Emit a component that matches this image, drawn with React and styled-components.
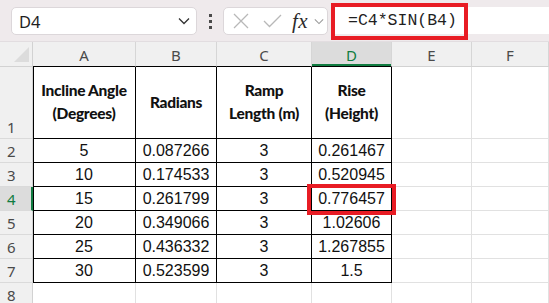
import React from 'react';
import styled, { createGlobalStyle } from 'styled-components';

const GlobalStyle = createGlobalStyle`
	html, body {
		margin: 0;
		padding: 0;
		background: #ffffff;
	}
	body {
		width: 549px;
		height: 303px;
		overflow: hidden;
		font-family: "Liberation Sans", Arial, sans-serif;
	}
`;

const COLUMNS = ['A', 'B', 'C', 'D', 'E', 'F'];

const HEADERS = [
	['Incline Angle', '(Degrees)'],
	['Radians'],
	['Ramp', 'Length (m)'],
	['Rise', '(Height)'],
];

const ROWS = [
	['5', '0.087266', '3', '0.261467'],
	['10', '0.174533', '3', '0.520945'],
	['15', '0.261799', '3', '0.776457'],
	['20', '0.349066', '3', '1.02606'],
	['25', '0.436332', '3', '1.267855'],
	['30', '0.523599', '3', '1.5'],
];

const GREEN = '#107c41';
const RED = '#e81c24';

// Formula bar
const TopBar = styled.div`
	display: flex;
	align-items: flex-start;
	height: 42px;
	padding: 7px 0 0 11px;
	box-sizing: border-box;
	background: #efeaec;
	border-bottom: 1px solid #e2dde0;
`;

const NameBox = styled.div`
	display: flex;
	align-items: center;
	justify-content: space-between;
	width: 186px;
	height: 28px;
	box-sizing: border-box;
	padding: 0 6px 0 7px;
	background: #ffffff;
	border: 1px solid #dcd7da;
	border-radius: 5px;
	font-family: "Noto Sans", "Open Sans", sans-serif;
	font-size: 16.5px;
	color: #1f1f1f;
`;

const Dots = styled.div`
	display: flex;
	flex-direction: column;
	align-items: center;
	justify-content: center;
	gap: 3px;
	width: 26px;
	height: 28px;

	span {
		width: 3px;
		height: 3px;
		background: #4a4a4a;
	}
`;

const ButtonBox = styled.div`
	display: flex;
	align-items: center;
	width: 105px;
	height: 28px;
	box-sizing: border-box;
	padding-left: 2px;
	background: #ffffff;
	border: 1px solid #dcd7da;
	border-radius: 5px;
`;

const IconSlot = styled.div`
	display: flex;
	align-items: center;
	justify-content: center;
	width: ${(props) => props.$w}px;
	height: 26px;
`;

const FxText = styled.span`
	font-family: "Liberation Serif", "Times New Roman", serif;
	font-style: italic;
	font-size: 21px;
	color: #2b2b2b;
	letter-spacing: 0.5px;
	line-height: 1;
`;

const FormulaBox = styled.div`
	position: relative;
	flex: 1;
	display: flex;
	align-items: center;
	height: 27px;
	margin-left: 3px;
	padding-left: 17px;
	background: #ffffff;
	font-family: "Liberation Mono", "Courier New", monospace;
	font-size: 16.5px;
	color: #1f1f1f;
`;

const RedFrame = styled.div`
	position: absolute;
	top: ${(props) => props.$top}px;
	left: ${(props) => props.$left}px;
	width: ${(props) => props.$w}px;
	height: ${(props) => props.$h}px;
	box-sizing: border-box;
	border: 4px solid ${RED};
	pointer-events: none;
	z-index: 2;
`;

// Sheet grid
const Sheet = styled.div`
	display: grid;
	grid-template-columns: 33px 103px 81px 95px 80px 80px 1fr;
	grid-template-rows: 25px 72px repeat(7, 24px);
`;

const Corner = styled.div`
	position: relative;
	background: #f0f0f0;
	border-right: 1px solid #d2d2d2;
	border-bottom: 1px solid #d2d2d2;

	&::after {
		content: '';
		position: absolute;
		right: 3px;
		bottom: 4px;
		width: 0;
		height: 0;
		border-left: 15px solid transparent;
		border-bottom: 15px solid #dcdcdc;
	}
`;

const ColHead = styled.div`
	display: flex;
	align-items: center;
	justify-content: center;
	background: ${(props) => (props.$active ? '#dcdcdc' : '#f0f0f0')};
	border-right: 1px solid #d6d6d6;
	border-bottom: 1px solid ${(props) => (props.$table ? '#000000' : '#d2d2d2')};
	box-shadow: ${(props) => (props.$active ? `inset 0 -2px 0 ${GREEN}` : 'none')};
	font-family: "Noto Sans", "Open Sans", sans-serif;
	font-size: 15px;
	color: ${(props) => (props.$active ? GREEN : '#4a4a4a')};
	padding-top: 1px;
`;

const RowHead = styled.div`
	display: flex;
	align-items: ${(props) => (props.$bottom ? 'flex-end' : 'center')};
	padding-left: 7px;
	background: ${(props) => (props.$active ? '#dcdcdc' : '#f0f0f0')};
	border-right: ${(props) => (props.$active ? `2px solid ${GREEN}` : '1px solid #d2d2d2')};
	border-bottom: 1px solid #dadada;
	font-family: "Noto Sans", "Open Sans", sans-serif;
	font-size: 15px;
	line-height: 22px;
	color: ${(props) => (props.$active ? GREEN : '#4a4a4a')};
`;

const Cell = styled.div`
	position: relative;
	display: flex;
	flex-direction: column;
	align-items: center;
	justify-content: ${(props) => (props.$head ? 'center' : 'flex-end')};
	text-align: center;
	box-sizing: border-box;
	background: #ffffff;
	border-right: 1px solid ${(props) => (props.$table ? '#000000' : '#e1e1e1')};
	border-bottom: 1px solid ${(props) => (props.$table ? '#000000' : '#e1e1e1')};
	box-shadow: ${(props) => (props.$first ? 'inset 1px 0 0 #000000' : 'none')};
	font-size: 16px;
	line-height: 20px;
	color: #111111;
	padding-bottom: 1px;
`;

const HeadText = styled.div`
	font-family: Lato, "Liberation Sans", sans-serif;
	font-weight: 900;
	font-size: 15.5px;
	line-height: 23px;
	letter-spacing: -0.3px;
	color: #111111;
	white-space: nowrap;
`;

const ChevronDown = ({ color, size }) => ( // eslint-disable-line
	<svg width={size} height={size / 2 + 2} viewBox="0 0 12 8">
		<polyline points="1,1.5 6,6.5 11,1.5" fill="none" stroke={color} strokeWidth="1.3" />
	</svg>
);

const FormulaBar = () => (
	<TopBar>
		<NameBox>
			<span>D4</span>
			<ChevronDown color="#333333" size={12} />
		</NameBox>
		<Dots>
			<span />
			<span />
			<span />
		</Dots>
		<ButtonBox>
			<IconSlot $w={30}>
				<svg width="16" height="16" viewBox="0 0 16 16">
					<path d="M1 1 L15 15 M15 1 L1 15" stroke="#b8b8b8" strokeWidth="1.3" fill="none" />
				</svg>
			</IconSlot>
			<IconSlot $w={32}>
				<svg width="19" height="14" viewBox="0 0 19 14">
					<polyline points="1,7 6.5,12.5 18,1" stroke="#b8b8b8" strokeWidth="1.3" fill="none" />
				</svg>
			</IconSlot>
			<IconSlot $w={24}>
				<FxText>fx</FxText>
			</IconSlot>
			<IconSlot $w={14}>
				<ChevronDown color="#9a9a9a" size={10} />
			</IconSlot>
		</ButtonBox>
		<FormulaBox>
			=C4*SIN(B4)
			<RedFrame $top={-4} $left={0} $w={137} $h={37} />
		</FormulaBox>
	</TopBar>
);

const EmptyCells = ({ count, prefix }) => ( // eslint-disable-line
	<>
		{Array.from({ length: count }, (_, i) => (
			<Cell key={`${prefix}-${i}`} />
		))}
	</>
);

const App = () => {
	const activeRow = 4;

	return (
		<>
			<GlobalStyle />
			<FormulaBar />
			<Sheet>
				<Corner />
				{COLUMNS.map((col, i) => (
					<ColHead key={col} $table={i < 4} $active={col === 'D'}>
						{col}
					</ColHead>
				))}

				<RowHead $bottom>1</RowHead>
				{HEADERS.map((lines, i) => (
					<Cell key={`h-${lines[0]}`} $head $table $first={i === 0}>
						{lines.map((line) => (
							<HeadText key={line}>{line}</HeadText>
						))}
					</Cell>
				))}
				<EmptyCells count={2} prefix="h" />

				{ROWS.map((row, r) => {
					const rowNum = r + 2;
					return (
						<React.Fragment key={`r-${rowNum}`}>
							<RowHead $active={rowNum === activeRow}>{rowNum}</RowHead>
							{row.map((value, c) => (
								<Cell key={`c-${rowNum}-${c}`} $table $first={c === 0}>
									<span>{value}</span>
									{rowNum === activeRow && c === 3 && (
										<RedFrame $top={-3} $left={-5} $w={89} $h={31} />
									)}
								</Cell>
							))}
							<EmptyCells count={2} prefix={`e-${rowNum}`} />
						</React.Fragment>
					);
				})}

				<RowHead>8</RowHead>
				<EmptyCells count={6} prefix="last" />
			</Sheet>
		</>
	);
};

export default App;
